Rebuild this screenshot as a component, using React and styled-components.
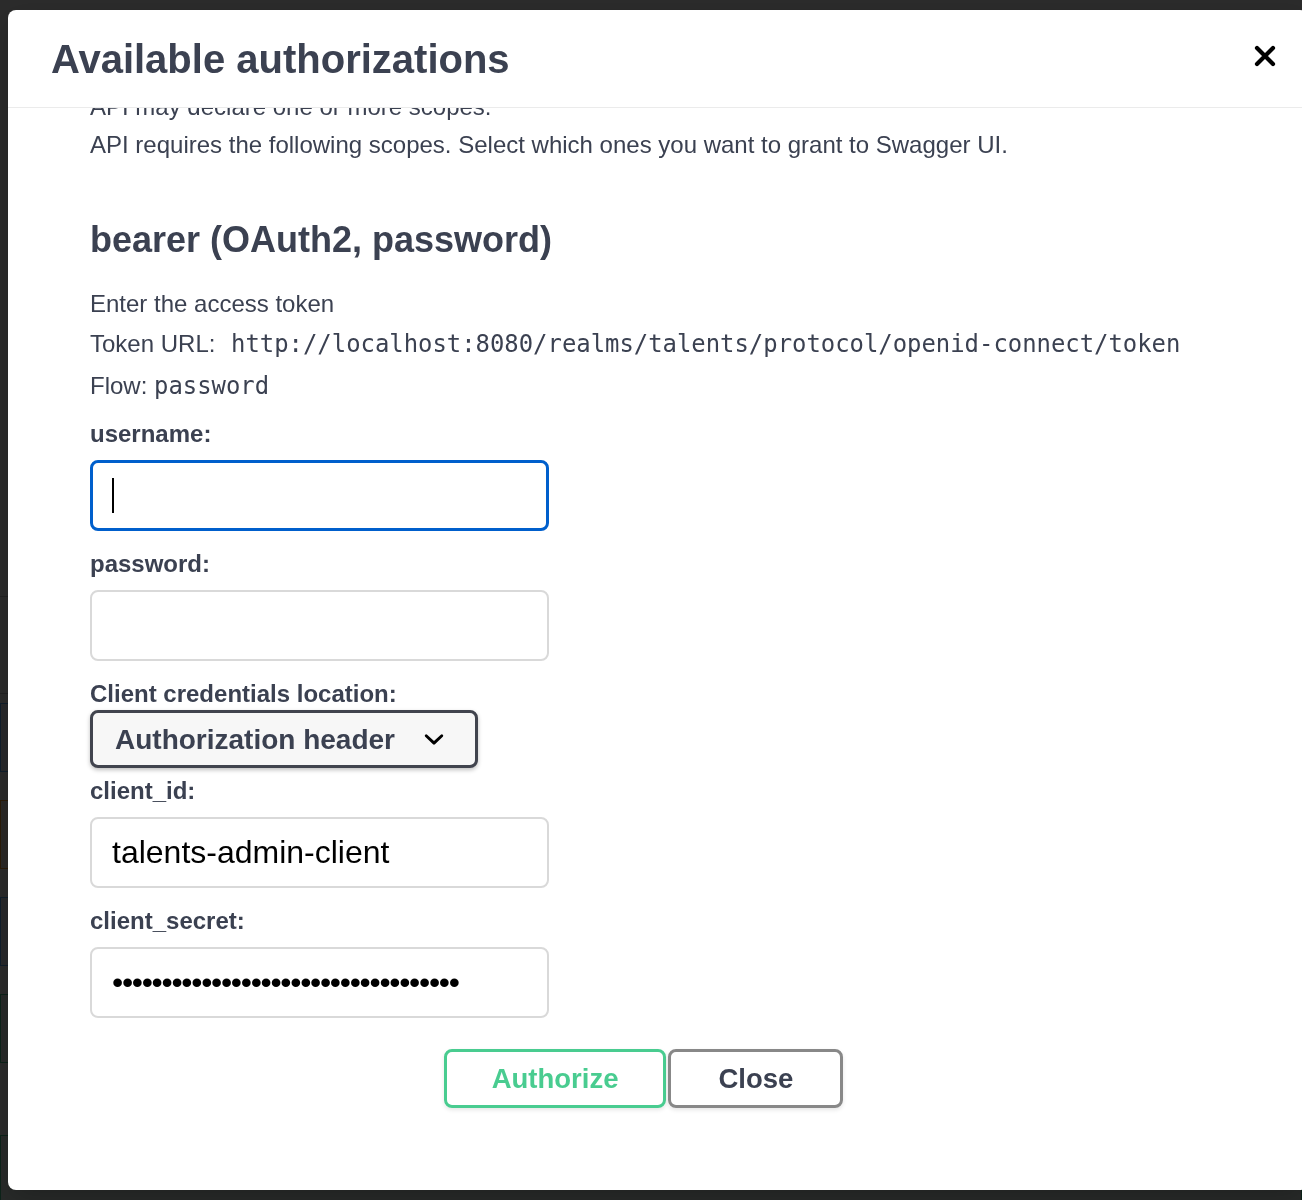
import { useLayoutEffect, useRef } from "react";
import styled, { createGlobalStyle } from "styled-components";

const GlobalStyle = createGlobalStyle`
  html, body {
    margin: 0;
    padding: 0;
    background: #ffffff;
  }
  body {
    font-family: "Liberation Sans", Helvetica, Arial, sans-serif;
    color: #3b4151;
  }
  * {
    box-sizing: border-box;
  }
`;

// page behind the overlay (only a sliver shows)
const Page = styled.div`
  padding-top: 530px;
  height: 1200px;
  overflow: hidden;
`;
const TagRow = styled.div`
  height: ${(p) => p.$h}px;
  border-bottom: 1px solid #c4c6cc;
`;
const OpBlock = styled.div`
  height: 69px;
  margin-top: ${(p) => p.$top}px;
  border: 1px solid ${(p) => p.$color};
  background: ${(p) => p.$bg};
`;

const Backdrop = styled.div`
  position: fixed;
  inset: 0;
  background: rgba(0, 0, 0, 0.83);
  padding: 10px 0 0 8px;
  overflow: hidden;
`;
const Modal = styled.div`
  width: 1300px;
  height: 1180px;
  background: #ffffff;
  border-radius: 8px;
  box-shadow: 0 10px 30px 0 rgba(0, 0, 0, 0.2);
  display: flex;
  flex-direction: column;
  overflow: hidden;
`;
const Header = styled.div`
  height: 98px;
  flex: none;
  display: flex;
  align-items: center;
  justify-content: space-between;
  padding: 0 32px 0 43px;
  border-bottom: 1px solid #ebebeb;
`;
const Title = styled.h3`
  margin: 0;
  font-size: 40px;
  font-weight: 700;
  line-height: 46px;
  color: #3b4151;
`;
const CloseIcon = styled.button`
  border: none;
  background: none;
  padding: 0;
  width: 22px;
  height: 22px;
  display: flex;
  margin-top: -6px;
  cursor: pointer;
`;
const ScrollArea = styled.div`
  height: 1082px;
  flex: none;
  overflow: hidden;
`;
const Content = styled.div`
  padding: 40px 111px 82px 82px;
`;
const ScopeText = styled.p`
  margin: 0;
  font-size: 24px;
  line-height: 38px;
  white-space: nowrap;
`;
const SchemeTitle = styled.h4`
  margin: 55px 0 0;
  font-size: 36px;
  font-weight: 700;
  line-height: 42px;
`;
const Info = styled.p`
  margin: ${(p) => p.$top}px 0 0;
  font-size: 24px;
  line-height: 28px;
  height: 28px;
`;
const Code = styled.code`
  font-family: "DejaVu Sans Mono", Menlo, monospace;
  font-size: 23.9px;
  line-height: 28px;
  margin-left: ${(p) => p.$gap || 0}px;
`;
const Label = styled.label`
  display: block;
  margin-top: ${(p) => p.$top}px;
  font-size: 24px;
  font-weight: 700;
  line-height: 28px;
`;
const FieldBox = styled.div`
  position: relative;
  width: 459px;
  margin-top: 12px;
`;
const Input = styled.input`
  display: block;
  width: 459px;
  height: 71px;
  padding: 0 20px;
  border: ${(p) => (p.$focused ? "3px solid #005fcc" : "2px solid #d9d9d9")};
  border-radius: 8px;
  background: #ffffff;
  font-family: "Liberation Sans", Helvetica, Arial, sans-serif;
  font-size: 32px;
  color: #000000;
  outline: none;
  letter-spacing: ${(p) => (p.type === "password" ? "-1.3px" : "normal")};
`;
const Caret = styled.span`
  position: absolute;
  left: 22px;
  top: 18px;
  width: 2px;
  height: 35px;
  background: #000000;
`;
const SelectBox = styled.div`
  position: relative;
  width: 388px;
  margin-top: 2px;
`;
const Select = styled.select`
  appearance: none;
  display: block;
  width: 388px;
  height: 58px;
  padding: 0 80px 0 22px;
  border: 3px solid #41444e;
  border-radius: 8px;
  background: #f7f7f7;
  box-shadow: 0 2px 4px 0 rgba(0, 0, 0, 0.25);
  font-family: "Liberation Sans", Helvetica, Arial, sans-serif;
  font-size: 28px;
  font-weight: 700;
  color: #3b4151;
  outline: none;
`;
const Chevron = styled.svg`
  position: absolute;
  right: 24px;
  top: 9px;
  width: 40px;
  height: 40px;
  pointer-events: none;
`;
const ButtonRow = styled.div`
  display: flex;
  justify-content: center;
  gap: 2px;
  margin-top: 31px;
`;
const Button = styled.button`
  height: 59px;
  padding: 0 ${(p) => (p.$primary ? 45 : 47)}px;
  border: 3px solid ${(p) => (p.$primary ? "#49cc90" : "#888888")};
  border-radius: 8px;
  background: transparent;
  box-shadow: 0 2px 4px rgba(0, 0, 0, 0.1);
  font-family: "Liberation Sans", Helvetica, Arial, sans-serif;
  font-size: 27.5px;
  font-weight: 700;
  color: ${(p) => (p.$primary ? "#49cc90" : "#3b4151")};
  cursor: pointer;
`;

const Field = ({ label, top, focused, type = "text", value = "" }) => (
  <>
    <Label $top={top}>{label}</Label>
    <FieldBox>
      <Input type={type} $focused={focused} defaultValue={value} readOnly />
      {focused && <Caret />}
    </FieldBox>
  </>
);

const App = () => {
  const scrollRef = useRef(null);

  useLayoutEffect(() => {
    if (scrollRef.current) scrollRef.current.scrollTop = 98;
  }, []);

  return (
    <>
      <GlobalStyle />
      <Page>
        <TagRow $h={67} />
        <TagRow $h={97} />
        <OpBlock $top={9} $color="#61affe" $bg="#ebf3fb" />
        <OpBlock $top={28} $color="#fca130" $bg="#fbf1e6" />
        <OpBlock $top={28} $color="#61affe" $bg="#ebf3fb" />
        <OpBlock $top={28} $color="#49cc90" $bg="#e8f6f0" />
        <OpBlock $top={72} $color="#49cc90" $bg="#e8f6f0" />
      </Page>
      <Backdrop>
        <Modal>
          <Header>
            <Title>Available authorizations</Title>
            <CloseIcon aria-label="Close">
              <svg width="22" height="22" viewBox="0 0 22 22">
                <path
                  d="M3 3 L19 19 M19 3 L3 19"
                  stroke="#000"
                  strokeWidth="4.2"
                  strokeLinecap="round"
                />
              </svg>
            </CloseIcon>
          </Header>
          <ScrollArea ref={scrollRef}>
            <Content>
              <ScopeText>
                Scopes are used to grant an application different levels of access to data on behalf of the end user. Each
                <br />
                API may declare one or more scopes.
                <br />
                API requires the following scopes. Select which ones you want to grant to Swagger UI.
              </ScopeText>
              <SchemeTitle>bearer (OAuth2, password)</SchemeTitle>
              <Info $top={29}>Enter the access token</Info>
              <Info $top={12}>
                Token URL: <Code $gap={9}>http://localhost:8080/realms/talents/protocol/openid-connect/token</Code>
              </Info>
              <Info $top={14}>
                Flow: <Code>password</Code>
              </Info>
              <Field label="username:" top={20} focused />
              <Field label="password:" top={19} type="password" />
              <Label $top={19}>Client credentials location:</Label>
              <SelectBox>
                <Select defaultValue="header">
                  <option value="header">Authorization header</option>
                  <option value="body">Request body</option>
                </Select>
                <Chevron viewBox="0 0 20 20">
                  <path
                    d="M13.418 7.859a.695.695 0 01.978 0 .68.68 0 010 .969l-3.908 3.83a.697.697 0 01-.979 0l-3.908-3.83a.68.68 0 010-.969.695.695 0 01.978 0L10 11l3.418-3.141z"
                    fill="#000"
                  />
                </Chevron>
              </SelectBox>
              <Field label="client_id:" top={9} value="talents-admin-client" />
              <Field
                label="client_secret:"
                top={19}
                type="password"
                value="abcdefghijklmnopqrstuvwxyz123456789"
              />
              <ButtonRow>
                <Button $primary>Authorize</Button>
                <Button>Close</Button>
              </ButtonRow>
            </Content>
          </ScrollArea>
        </Modal>
      </Backdrop>
    </>
  );
};

export default App;
